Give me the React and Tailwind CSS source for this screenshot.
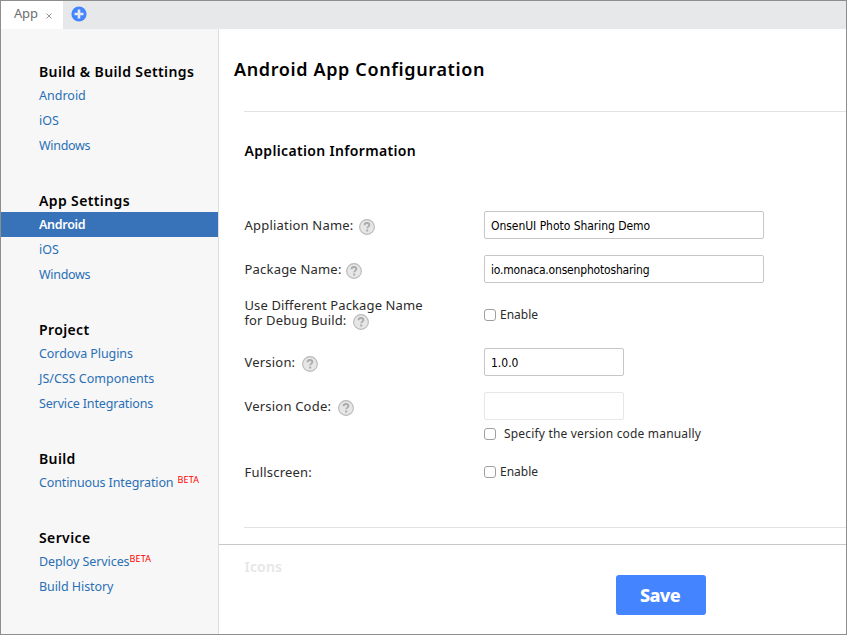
const groups = [
  { title: "Build & Build Settings", links: [["Android", ""], ["iOS", ""], ["Windows", "tracking-[-0.3px]"]] },
  { title: "App Settings", links: [["Android", "tracking-[-0.3px]", "", true], ["iOS", ""], ["Windows", "tracking-[-0.3px]"]] },
  { title: "Project", links: [["Cordova Plugins", "tracking-[-0.08px]"], ["JS/CSS Components", "tracking-[0.01px]"], ["Service Integrations", "tracking-[-0.15px]"]] },
  { title: "Build", links: [["Continuous Integration", "tracking-[-0.12px]", "ml-[4px]"]] },
  { title: "Service", links: [["Deploy Services", "tracking-[-0.08px]", "ml-0"], ["Build History", "tracking-[-0.07px]"]] },
];

function NavLink({ label, tracking, beta, active }) {
  return (
    <a
      className={
        "flex h-[25px] items-center whitespace-nowrap pt-[2px] pl-[38px] text-[12.5px] " +
        (active ? "bg-[#3872b9] font-semibold text-white " : "text-[#2a6fb5] ") +
        tracking
      }
    >
      {label}
      {beta && <sup className={"top-0 mb-[8px] text-[9px] leading-none tracking-[0.2px] text-[#ff0000] " + beta}>BETA</sup>}
    </a>
  );
}

function Help({ className = "" }) {
  return (
    <svg viewBox="0 0 16 16" className={"inline-block size-4 shrink-0 " + className}>
      <circle cx="8" cy="8" r="7.4" fill="#e6e6e6" stroke="#b9b9b9" strokeWidth="1.1" />
      <path d="M5.6 6.3C5.6 4.8 6.6 4 8 4s2.4.8 2.4 2.1c0 1.5-2.2 1.6-2.2 3.2" fill="none" stroke="#ababab" strokeWidth="1.8" />
      <rect x="7.2" y="10.5" width="2" height="2" fill="#ababab" />
    </svg>
  );
}

function Label({ children, help = true, gap = "ml-[7px]" }) {
  return (
    <div className="flex h-7 w-[240px] shrink-0 items-center text-[13px] tracking-[0.2px] whitespace-nowrap">
      <span className="mt-[2px] ml-[0.5px]">{children}</span>
      {help && <Help className={"mt-[4px] " + gap} />}
    </div>
  );
}

function Check({ children, className = "gap-[4px]" }) {
  return (
    <label className={"flex h-4 items-center text-[12px] whitespace-nowrap " + className}>
      <input type="checkbox" className="size-3 shrink-0 appearance-none rounded-[3px] border border-[#a0a0a0] bg-white" />
      {children}
    </label>
  );
}

const field = "h-7 rounded-[2px] border bg-white px-[6px] pt-[2px] font-['DejaVu_Sans_Condensed','DejaVu_Sans',sans-serif] font-[stretch:condensed] text-[12px] text-black outline-none";

export default function App() {
  return (
    <div className="flex h-[635px] w-[847px] flex-col overflow-hidden border border-[#8e8e8e] bg-white font-['Noto_Sans',sans-serif] text-[#2b2b2b]">
      <header className="flex h-7 shrink-0 bg-[#e7e8ea]">
        <div className="flex w-[62px] items-center bg-white pl-[13px] text-[13px] text-[#6e6e6e]">
          <span className="-mt-[2px] tracking-[-0.2px]">App</span>
          <svg viewBox="0 0 6 6" className="mt-[2px] ml-[8px] size-[6px]">
            <path d="M.5 .5L5.5 5.5M5.5 .5L.5 5.5" stroke="#8a8a8a" strokeWidth="0.9" />
          </svg>
        </div>
        <svg viewBox="0 0 16 16" className="mt-[5px] ml-[8px] size-4">
          <circle cx="8" cy="8" r="7.6" fill="#4285ff" />
          <path d="M8 3.5v9M3.5 8h9" stroke="#e7e8ea" strokeWidth="2.6" />
        </svg>
      </header>
      <div className="flex min-h-0 flex-1">
        <nav className="flex w-[218px] shrink-0 flex-col gap-8 border-r border-[#dedede] bg-[#f7f7f7] pt-8">
          {groups.map((g) => (
            <section key={g.title}>
              <h3 className="flex h-[22px] items-center pb-[2px] pl-[38px] text-[14px] font-semibold tracking-[0.38px] whitespace-nowrap text-black">{g.title}</h3>
              {g.links.map(([label, tracking, beta, active]) => (
                <NavLink key={label} label={label} tracking={tracking} beta={beta} active={active} />
              ))}
            </section>
          ))}
        </nav>
        <main className="flex min-w-0 flex-1 flex-col">
          <h1 className="mt-[28px] ml-[15px] h-6 text-[18px] leading-6 font-semibold tracking-[0.63px] text-black">Android App Configuration</h1>
          <section className="mt-[30px] ml-[25px] h-[417px] shrink-0 border-y border-[#e2e2e2]">
            <h2 className="mt-[29px] h-5 pl-[0.5px] text-[14px] leading-5 font-semibold tracking-[0.34px] text-black">Application Information</h2>
            <div className="mt-[50px] flex">
              <Label gap="ml-[6px]">Appliation Name:</Label>
              <input className={field + " w-[280px] border-[#c6c6c6] tracking-[-0.04px]"} defaultValue="OnsenUI Photo Sharing Demo" />
            </div>
            <div className="mt-4 flex">
              <Label gap="ml-[4px]">Package Name:</Label>
              <input className={field + " w-[280px] border-[#c6c6c6] tracking-[-0.18px]"} defaultValue="io.monaca.onsenphotosharing" />
            </div>
            <div className="mt-[15px] flex h-[34px] items-center">
              <div className="-mt-[4px] w-[240px] pl-[0.5px] text-[13px] leading-[15px] tracking-[0.12px] whitespace-nowrap">
                <div>Use Different Package Name</div>
                <div className="flex h-[15px] items-center">for Debug Build:<Help className="mt-[3px] ml-[7px]" /></div>
              </div>
              <Check>Enable</Check>
            </div>
            <div className="mt-4 flex">
              <Label>Version:</Label>
              <input className={field + " w-[140px] border-[#c6c6c6]"} defaultValue="1.0.0" />
            </div>
            <div className="mt-4 flex">
              <Label>Version Code:</Label>
              <div>
                <input disabled className={field + " block w-[140px] border-[#e7e7e7]"} />
                <div className="mt-[6px]"><Check className="gap-[8px] tracking-[0.18px]">Specify the version code manually</Check></div>
              </div>
            </div>
            <div className="mt-4 flex items-center">
              <Label help={false}>Fullscreen:</Label>
              <Check>Enable</Check>
            </div>
          </section>
          <footer className="mt-4 flex h-[90px] shrink-0 border-t border-[#c8c8c8] bg-white">
            <h2 className="mt-[12px] ml-[25px] w-[372px] pl-[0.5px] text-[14px] leading-5 font-semibold tracking-[0.2px] text-[#e6e6e6]">Icons</h2>
            <button className="mt-[30px] h-10 w-[90px] rounded-[3px] bg-[#4484ff] pr-[2px] text-[18px] font-extrabold tracking-[-0.6px] text-white">Save</button>
          </footer>
        </main>
      </div>
    </div>
  );
}
